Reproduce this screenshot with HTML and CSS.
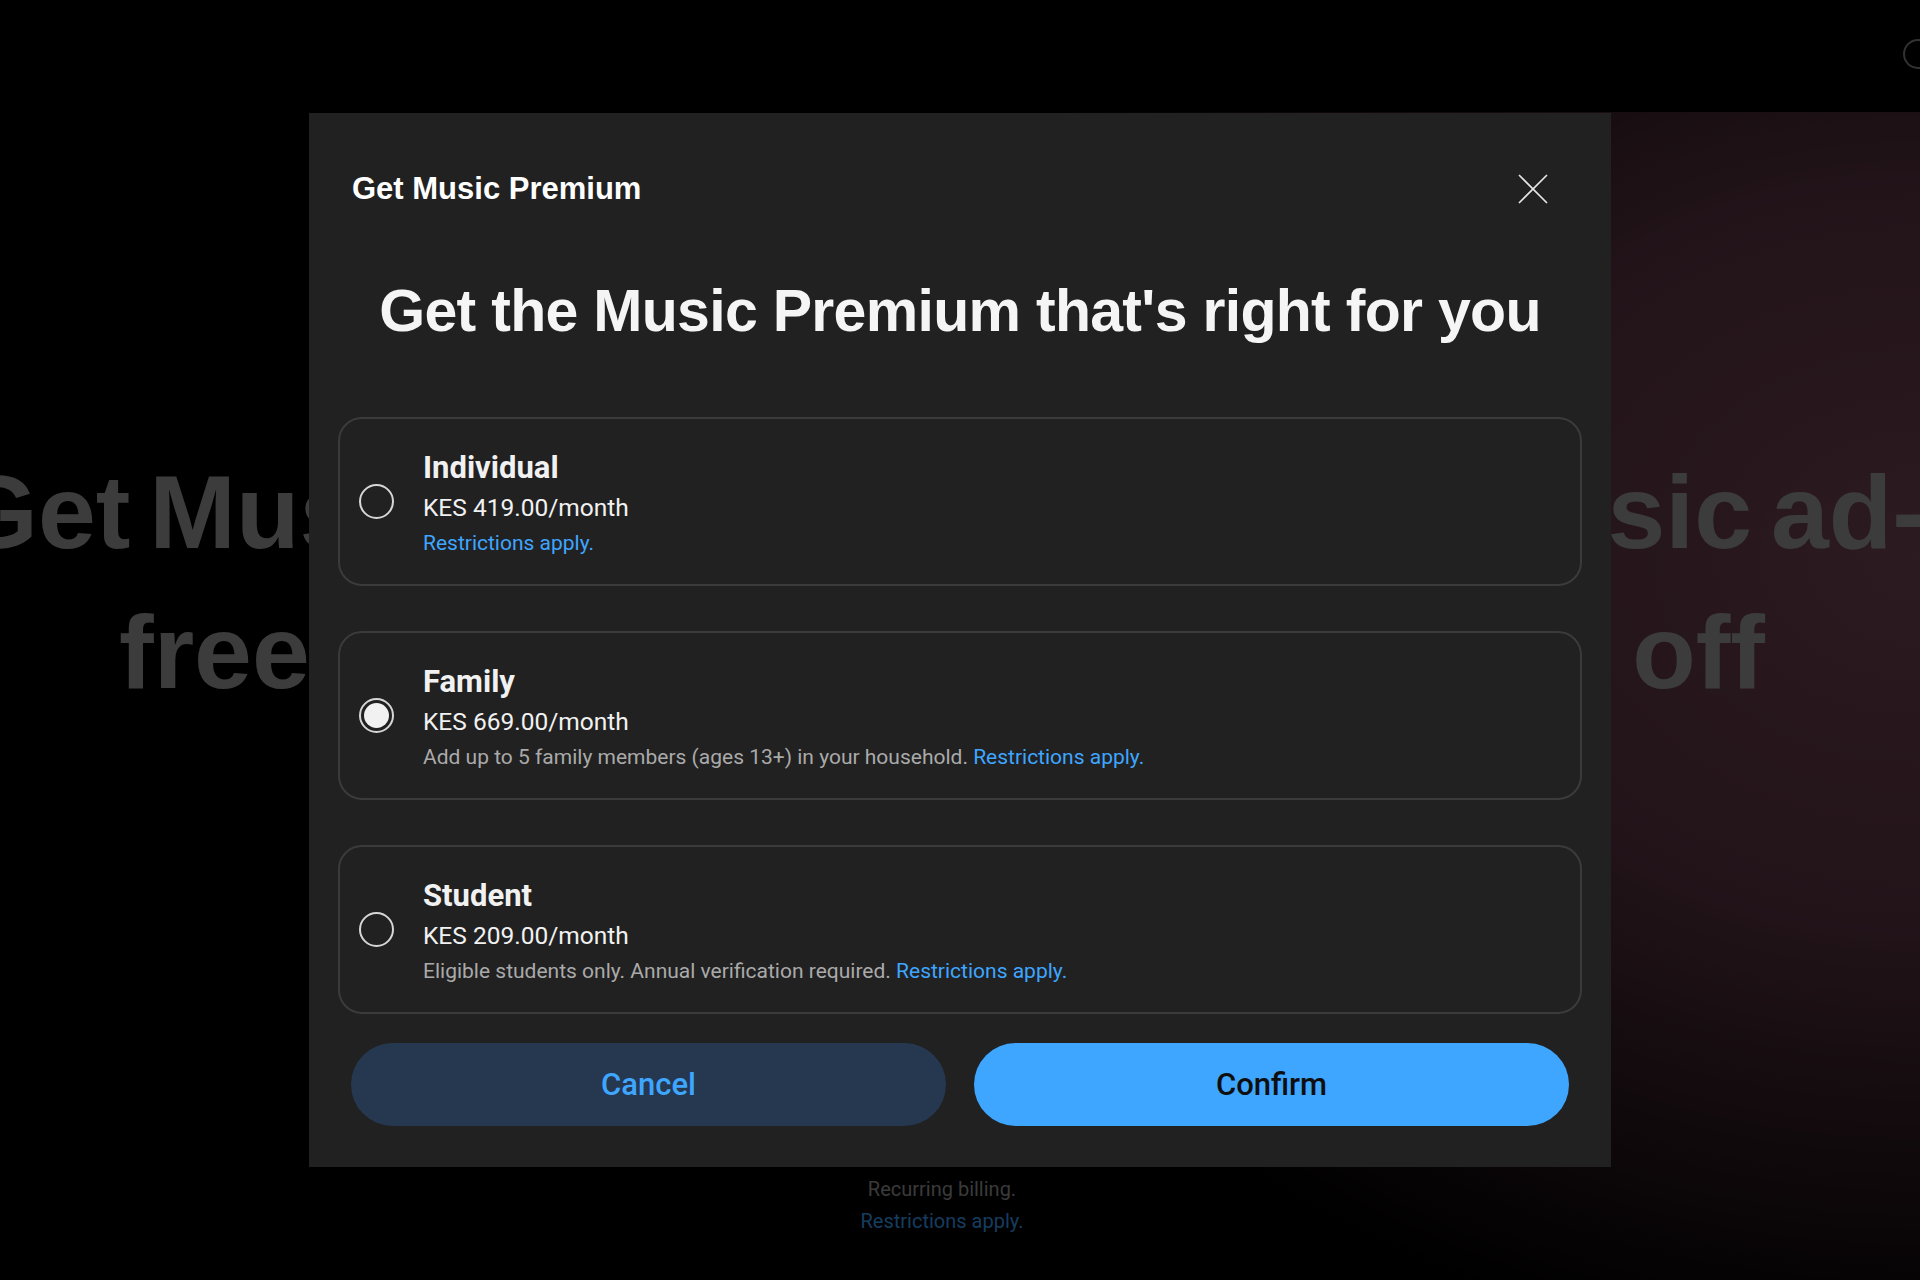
FILE: index.html
```html
<!DOCTYPE html>
<html lang="en">
<head>
<meta charset="utf-8">
<title>Get Music Premium</title>
<link rel="stylesheet" href="styles.css">
</head>
<body>
<div class="page">
  <header class="topbar">
    <span class="avatar-ring"></span>
  </header>
  <main class="hero">
    <h1 class="hero-title">
      <span class="hero-line hero-line-1">Get Music Premium to listen to music ad-</span>
      <span class="hero-line hero-line-2">free, offline, and with screen off</span>
    </h1>
    <div class="hero-foot">
      <p class="hero-note">Recurring billing.</p>
      <a class="hero-link" href="#">Restrictions apply.</a>
    </div>
  </main>
</div>

<div class="scrim"></div>

<div class="dialog" role="dialog" aria-labelledby="dlg-title">
  <div class="dialog-header">
    <h2 class="dialog-title" id="dlg-title">Get Music Premium</h2>
    <button class="close-btn" aria-label="Close">
      <svg viewBox="0 0 40 40" width="40" height="40" aria-hidden="true">
        <path d="M6.5 6.5 L33.5 33.5 M33.5 6.5 L6.5 33.5" stroke="#e6e6e6" stroke-width="1.7" fill="none" stroke-linecap="round"/>
      </svg>
    </button>
  </div>

  <h3 class="dialog-heading">Get the Music Premium that's right for you</h3>

  <div class="plans">
    <label class="plan">
      <span class="radio"></span>
      <span class="plan-text">
        <span class="plan-name">Individual</span>
        <span class="plan-price">KES 419.00/month</span>
        <span class="plan-desc"><a class="link" href="#">Restrictions apply.</a></span>
      </span>
    </label>
    <label class="plan">
      <span class="radio is-checked"></span>
      <span class="plan-text">
        <span class="plan-name">Family</span>
        <span class="plan-price">KES 669.00/month</span>
        <span class="plan-desc">Add up to 5 family members (ages 13+) in your household. <a class="link" href="#">Restrictions apply.</a></span>
      </span>
    </label>
    <label class="plan">
      <span class="radio"></span>
      <span class="plan-text">
        <span class="plan-name">Student</span>
        <span class="plan-price">KES 209.00/month</span>
        <span class="plan-desc">Eligible students only. Annual verification required. <a class="link" href="#">Restrictions apply.</a></span>
      </span>
    </label>
  </div>

  <div class="actions">
    <button class="btn btn-tonal">Cancel</button>
    <button class="btn btn-filled">Confirm</button>
  </div>
</div>
</body>
</html>
```

FILE: styles.css
```css
html, body {
  margin: 0;
  padding: 0;
  width: 1920px;
  height: 1280px;
  overflow: hidden;
  background: #000;
}

body {
  font-family: Roboto, "Liberation Sans", sans-serif;
}

.page {
  width: 1920px;
  height: 1280px;
  display: flex;
  flex-direction: column;
}

/* ---------- background page ---------- */
.topbar {
  height: 112px;
  flex: none;
  background: #000;
  display: flex;
  justify-content: flex-end;
  align-items: flex-start;
  padding-top: 39px;
  box-sizing: border-box;
  overflow: hidden;
}

.avatar-ring {
  width: 26px;
  height: 26px;
  border: 2px solid #8a8a8a;
  border-radius: 50%;
  margin-right: -13px;
  flex: none;
}

.hero {
  flex: 1;
  display: flex;
  flex-direction: column;
  align-items: center;
  padding-right: 36px;
  overflow: hidden;
  background:
    radial-gradient(ellipse 1050px 820px at 100% 38%, #7a4b5a 0%, #5e3746 45%, rgba(40, 20, 28, 0) 100%),
    #000;
}

.hero-title {
  margin: 330px 0 0;
  display: flex;
  flex-direction: column;
  align-items: center;
  font-family: "Liberation Sans", sans-serif;
  font-weight: 700;
  font-size: 104px;
  line-height: 140px;
  color: #a6a6a6;
  white-space: nowrap;
}

.hero-line {
  display: block;
}

.hero-line-1 {
  word-spacing: -10px;
}

.hero-line-2 {
  word-spacing: 16px;
}

.hero-foot {
  margin-top: 451px;
  display: flex;
  flex-direction: column;
  align-items: center;
  font-size: 20px;
  line-height: 32px;
}

.hero-note {
  margin: 0;
  color: #a0a0a0;
}

.hero-link {
  color: #3ea6ff;
  text-decoration: none;
}

/* ---------- scrim ---------- */
.scrim {
  position: fixed;
  inset: 0;
  background: rgba(0, 0, 0, 0.64);
}

/* ---------- dialog ---------- */
.dialog {
  position: fixed;
  top: 50%;
  left: 50%;
  transform: translate(-50%, -50%);
  width: 1302px;
  box-sizing: border-box;
  background: #212121;
  padding: 52px 29px 41px 29px;
  color: #f1f1f1;
}

.dialog-header {
  display: flex;
  align-items: center;
  justify-content: space-between;
  height: 48px;
  padding: 0 29px 0 14px;
}

.dialog-title {
  margin: 0;
  font-family: "Liberation Sans", sans-serif;
  font-weight: 700;
  font-size: 31px;
  line-height: 48px;
  color: #fff;
}

.close-btn {
  width: 40px;
  height: 40px;
  padding: 0;
  border: 0;
  background: transparent;
  display: flex;
  align-items: center;
  justify-content: center;
}

.dialog-heading {
  margin: 62px 0 70px;
  text-align: center;
  font-family: "Liberation Sans", sans-serif;
  font-weight: 700;
  font-size: 59px;
  letter-spacing: -0.7px;
  line-height: 72px;
  color: #f5f5f5;
}

.plans {
  display: flex;
  flex-direction: column;
  gap: 45px;
}

.plan {
  display: flex;
  align-items: center;
  gap: 29px;
  height: 169px;
  box-sizing: border-box;
  border: 2px solid #3b3b3b;
  border-radius: 24px;
  padding: 0 19px;
}

.radio {
  flex: none;
  width: 35px;
  height: 35px;
  box-sizing: border-box;
  border: 2px solid #d6d6d6;
  border-radius: 50%;
  display: flex;
  align-items: center;
  justify-content: center;
}

.radio.is-checked::after {
  content: "";
  width: 25px;
  height: 25px;
  border-radius: 50%;
  background: #f1f1f1;
}

.plan-text {
  display: flex;
  flex-direction: column;
  padding-top: 2px;
}

.plan-name {
  font-weight: 700;
  font-size: 31px;
  line-height: 40px;
  color: #f1f1f1;
}

.plan-price {
  font-size: 24.5px;
  line-height: 40px;
  color: #f1f1f1;
}

.plan-desc {
  font-size: 21px;
  line-height: 30px;
  color: #aaaaaa;
}

.link {
  color: #3ea6ff;
  text-decoration: none;
}

.actions {
  display: flex;
  gap: 28px;
  margin-top: 29px;
  padding: 0 13px 0 13px;
}

.btn {
  flex: 1;
  height: 83px;
  border: 0;
  border-radius: 42px;
  font-family: Roboto, "Liberation Sans", sans-serif;
  font-weight: 500;
  font-size: 31px;
}

.btn-tonal {
  background: #263850;
  color: #3ea6ff;
}

.btn-filled {
  background: #3ea6ff;
  color: #0f0f0f;
}
```
